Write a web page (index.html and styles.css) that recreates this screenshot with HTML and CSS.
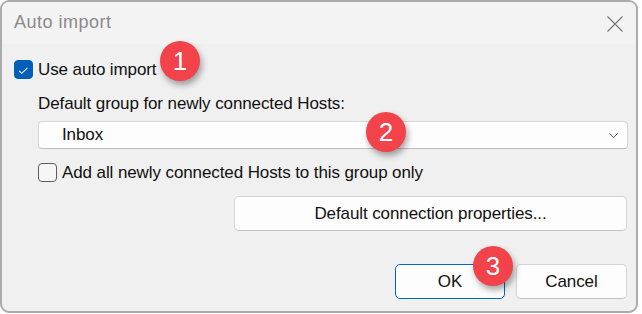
FILE: index.html
```html
<!DOCTYPE html>
<html>
<head>
<meta charset="utf-8">
<link rel="stylesheet" href="styles.css">
</head>
<body>
<div class="window">
  <div class="titlebar">
    <span class="title">Auto import</span>
    <svg class="close" width="16" height="16" viewBox="0 0 16 16"><path d="M0.5 0.5 L15.5 15.5 M15.5 0.5 L0.5 15.5" stroke="#767676" stroke-width="1.1" fill="none"/></svg>
  </div>
  <div class="content">
    <div class="check-row">
      <span class="cb checked"><svg width="19" height="19" viewBox="0 0 19 19"><path d="M5.2 10.8 L7.8 13.3 L13.4 7.8" stroke="#ffffff" stroke-width="1.1" fill="none"/></svg></span>
      <span class="text">Use auto import</span>
    </div>
    <div class="indent">
      <div class="label">Default group for newly connected Hosts:</div>
      <div class="combo">
        <span class="text">Inbox</span>
        <svg class="chev" width="9" height="5" viewBox="0 0 9 5"><path d="M0.5 0.5 L4.5 4.5 L8.5 0.5" stroke="#5a5a5a" stroke-width="1" fill="none"/></svg>
      </div>
      <div class="check-row second">
        <span class="cb"></span>
        <span class="text">Add all newly connected Hosts to this group only</span>
      </div>
      <div class="props-row">
        <button class="btn props">Default connection properties...</button>
      </div>
    </div>
    <div class="footer">
      <button class="btn ok">OK</button>
      <button class="btn cancel">Cancel</button>
    </div>
  </div>
  <span class="badge b1">1</span>
  <span class="badge b2">2</span>
  <span class="badge b3">3</span>
</div>
</body>
</html>
```

FILE: styles.css
```css
html, body {
  margin: 0;
  padding: 0;
  background: #ffffff;
}
body {
  font-family: "Liberation Sans", Arial, sans-serif;
  font-size: 17px;
  letter-spacing: -0.1px;
  color: #111111;
}
.window {
  position: relative;
  box-sizing: border-box;
  width: 638px;
  height: 313px;
  border: 2px solid #ababab;
  border-radius: 9px;
  background: #f0f0f0;
  overflow: hidden;
}
.titlebar {
  height: 42px;
  background: #f3f3f3;
  display: flex;
  align-items: center;
  justify-content: space-between;
  padding: 0 13px 0 12px;
}
.title {
  color: #8a8a8a;
  font-size: 18px;
  letter-spacing: 0.5px;
  margin-top: -1px;
}
.close {
  display: block;
  margin-top: 1px;
}
.content {
  padding: 16px 9px 0 12px;
}
.check-row {
  display: flex;
  align-items: center;
  height: 19px;
  line-height: 19px;
}
.cb {
  box-sizing: border-box;
  width: 19px;
  height: 19px;
  border: 1px solid #5d5d5d;
  border-radius: 4px;
  background: #f6f6f6;
  margin-right: 5px;
  flex: none;
}
.cb.checked {
  background: #005fb8;
  border-color: #005fb8;
}
.cb.checked svg {
  display: block;
  margin: -1px;
}
.indent {
  margin-left: 24px;
}
.label {
  margin-top: 15px;
  line-height: 20px;
}
.combo {
  box-sizing: border-box;
  margin-top: 7px;
  height: 28px;
  width: 590px;
  background: #fdfdfd;
  border: 1px solid #d6d6d6;
  border-bottom-color: #bdbdbd;
  border-radius: 4px;
  display: flex;
  align-items: center;
  justify-content: space-between;
  padding: 0 9px 0 23px;
}
.chev {
  display: block;
}
.check-row.second {
  margin-top: 14px;
}
.props-row {
  display: flex;
  justify-content: flex-end;
  margin-top: 14px;
}
.btn {
  box-sizing: border-box;
  height: 35px;
  background: #fdfdfd;
  border: 1px solid #d5d5d5;
  border-bottom-color: #c2c2c2;
  border-radius: 5px;
  font-family: "Liberation Sans", Arial, sans-serif;
  font-size: 17px;
  letter-spacing: -0.1px;
  color: #111111;
  padding: 0;
}
.btn.props {
  width: 393px;
}
.footer {
  display: flex;
  justify-content: flex-end;
  gap: 11px;
  margin-top: 33px;
}
.btn.ok {
  width: 110px;
  border: 1px solid #0067c0;
}
.btn.cancel {
  width: 111px;
}
.badge {
  position: absolute;
  width: 40px;
  height: 40px;
  border-radius: 50%;
  background: #f2424a;
  color: #ffffff;
  font-size: 26px;
  letter-spacing: 0;
  line-height: 40px;
  text-align: center;
  box-shadow: 2px 4px 6px rgba(0, 0, 0, 0.35);
}
.b1 { left: 158px; top: 39px; }
.b2 { left: 364px; top: 110px; }
.b3 { left: 471px; top: 244px; }
```
